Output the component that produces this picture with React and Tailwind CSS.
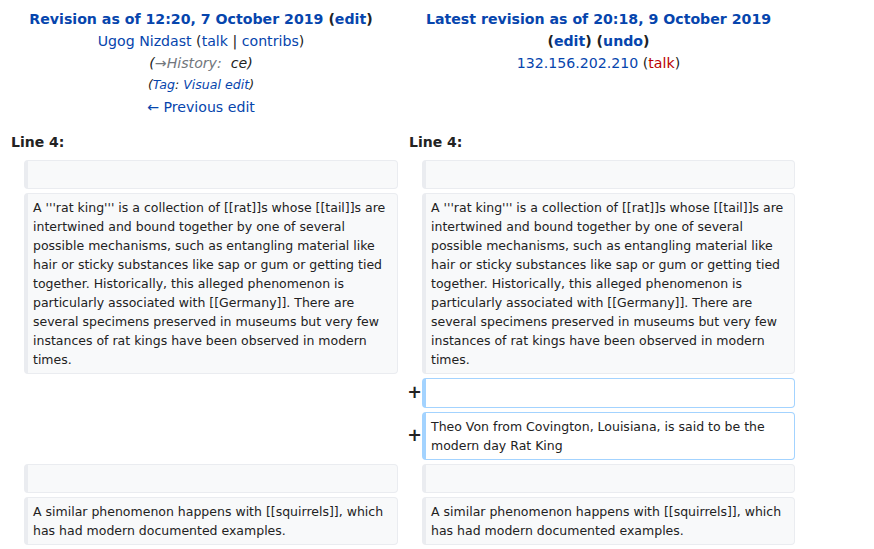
const ratKing =
  "A '''rat king''' is a collection of [[rat]]s whose [[tail]]s are intertwined and bound together by one of several possible mechanisms, such as entangling material like hair or sticky substances like sap or gum or getting tied together. Historically, this alleged phenomenon is particularly associated with [[Germany]]. There are several specimens preserved in museums but very few instances of rat kings have been observed in modern times.";
const squirrels =
  'A similar phenomenon happens with [[squirrels]], which has had modern documented examples.';

const link = 'text-[#0645ad]';

function Cell({ kind = 'context', tall = false, children }) {
  const tone =
    kind === 'added'
      ? 'bg-white border-[#a3d3ff]'
      : 'bg-[#f8f9fa] border-[#eaecf0]';
  return (
    <div
      className={`${tall ? 'min-h-[29.5px]' : 'min-h-[28.5px]'} rounded-[4px] border border-l-4 ${tone} px-[5px] py-[3.75px] text-[12.5px] leading-[19px] whitespace-pre-wrap text-[#222]`}
    >
      {children}
    </div>
  );
}

function Marker({ sign }) {
  return (
    <div className="self-center -mr-[4px] text-right font-bold text-[17.5px] leading-[21px] text-[#222]">
      {sign}
    </div>
  );
}

export default function App() {
  return (
    <div className="min-h-screen bg-white pl-1 font-['DejaVu_Sans',sans-serif] text-[#222]">
      <div className="grid grid-cols-[16px_374px_16px_373px] gap-x-1">
        {/* Revision headers */}
        <div className="col-span-2 pt-[8px] text-center text-[14.15px] leading-[22px]">
          <div className="font-bold">
            <span className={link}>Revision as of 12:20, 7 October 2019</span> (
            <span className={link}>edit</span>)
          </div>
          <div>
            <span className={link}>Ugog Nizdast</span> (<span className={link}>talk</span> |{' '}
            <span className={link}>contribs</span>)
          </div>
          <div className="italic">
            (<span className="text-[#72777d]">→History:</span>&nbsp; ce)
          </div>
          <div className="italic text-[12.6px]">
            (<span className={link}>Tag</span>: <span className={link}>Visual edit</span>)
          </div>
          <div className={link}>← Previous edit</div>
        </div>
        <div className="col-span-2 pt-[8px] text-center text-[14.15px] leading-[22px]">
          <div className="font-bold">
            <span className={link}>Latest revision as of 20:18, 9 October 2019</span>
          </div>
          <div className="font-bold">
            (<span className={link}>edit</span>) (<span className={link}>undo</span>)
          </div>
          <div>
            <span className={link}>132.156.202.210</span> (
            <span className="text-[#ba0000]">talk</span>)
          </div>
        </div>

        {/* Line numbers */}
        <div className="col-span-2 mt-[13px] px-[7px] text-[14px] font-bold leading-[22px]">Line 4:</div>
        <div className="col-span-2 mt-[13px] px-[7px] text-[14px] font-bold leading-[22px]">Line 4:</div>

        {/* Rows */}
        <div className="col-span-4 mt-[7px] grid grid-cols-subgrid gap-y-[4.5px]">
          <div />
          <Cell />
          <div />
          <Cell />

          <div />
          <Cell>{ratKing}</Cell>
          <div />
          <Cell>{ratKing}</Cell>

          <div />
          <div />
          <Marker sign="+" />
          <Cell kind="added" tall />

          <div />
          <div />
          <Marker sign="+" />
          <Cell kind="added">Theo Von from Covington, Louisiana, is said to be the modern day Rat King</Cell>

          <div />
          <Cell />
          <div />
          <Cell />

          <div />
          <Cell>{squirrels}</Cell>
          <div />
          <Cell>{squirrels}</Cell>
        </div>
      </div>
    </div>
  );
}
